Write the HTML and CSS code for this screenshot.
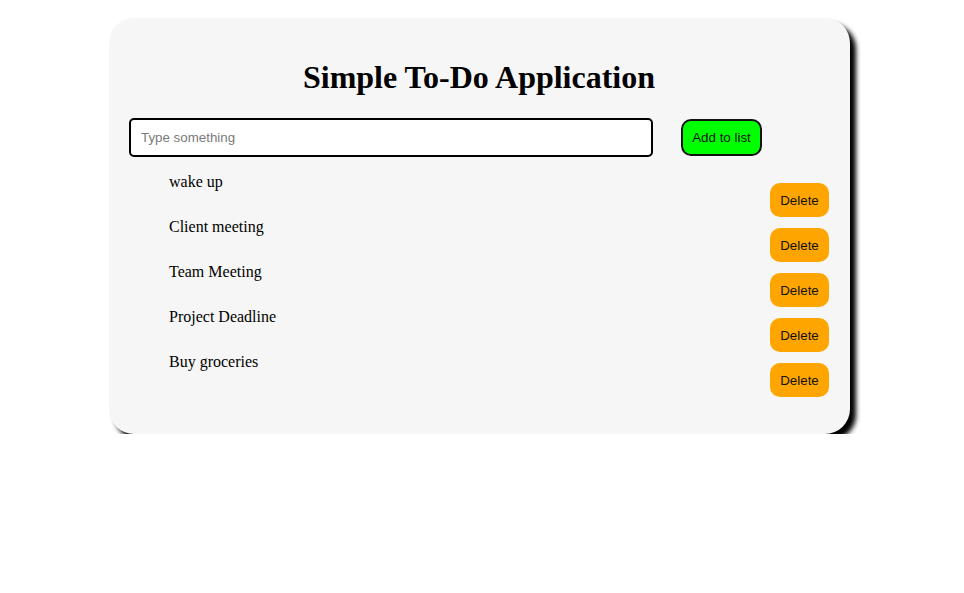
FILE: index.html
```html
<!DOCTYPE html>
<html>
<head>
<meta charset="utf-8">
<link rel="stylesheet" href="styles.css">
</head>
<body>
<div class="container">
  <h1 class="title">Simple To-Do Application</h1>
  <div class="input-row">
    <input class="task-input" type="text" placeholder="Type something">
    <button class="add-btn">Add to list</button>
  </div>
  <ul class="task-list">
    <li class="task"><span class="task-text">wake up</span><button class="delete-btn">Delete</button></li>
    <li class="task"><span class="task-text">Client meeting</span><button class="delete-btn">Delete</button></li>
    <li class="task"><span class="task-text">Team Meeting</span><button class="delete-btn">Delete</button></li>
    <li class="task"><span class="task-text">Project Deadline</span><button class="delete-btn">Delete</button></li>
    <li class="task"><span class="task-text">Buy groceries</span><button class="delete-btn">Delete</button></li>
  </ul>
</div>
</body>
</html>
```
FILE: styles.css
```css
html, body {
  margin: 0;
  padding: 0;
  background: #ffffff;
}
body {
  font-family: "Liberation Serif", "Times New Roman", serif;
  font-size: 16px;
  color: #000;
  padding-top: 18px;
}
.container {
  box-sizing: border-box;
  width: 741px;
  margin: 0 0 0 109px;
  background: #f6f6f6;
  border-radius: 25px;
  box-shadow: 6px 6px 5px #000;
  padding: 20px 21px 20px 20px;
  height: 416px;
}
.title {
  margin: 21px 0 22px;
  text-align: center;
  font-size: 32px;
  font-weight: bold;
  line-height: 37px;
}
.input-row {
  display: flex;
  align-items: center;
  gap: 28px;
}
.task-input {
  box-sizing: border-box;
  width: 524px;
  height: 39px;
  border: 2px solid #000;
  border-radius: 5px;
  background: #fff;
  padding: 0 10px;
  font-family: "Liberation Sans", Arial, sans-serif;
  font-size: 13.33px;
  outline: none;
}
.task-input::placeholder {
  color: #7a7a7a;
}
.add-btn {
  box-sizing: border-box;
  width: 81px;
  height: 37px;
  background: #00ff00;
  border: 2px solid #111;
  border-radius: 10px;
  font-family: "Liberation Sans", Arial, sans-serif;
  font-size: 13.33px;
  color: #111;
  padding: 0;
}
.task-list {
  list-style: none;
  margin: 16px 0 0;
  padding: 0 0 0 40px;
}
.task {
  display: flex;
  justify-content: space-between;
  align-items: flex-start;
  height: 45px;
}
.task-text {
  line-height: 18px;
}
.delete-btn {
  box-sizing: border-box;
  width: 59px;
  height: 34px;
  margin-top: 10px;
  background: #ffa500;
  border: none;
  border-radius: 10px;
  font-family: "Liberation Sans", Arial, sans-serif;
  font-size: 13.33px;
  color: #111;
  padding: 0;
}
```
